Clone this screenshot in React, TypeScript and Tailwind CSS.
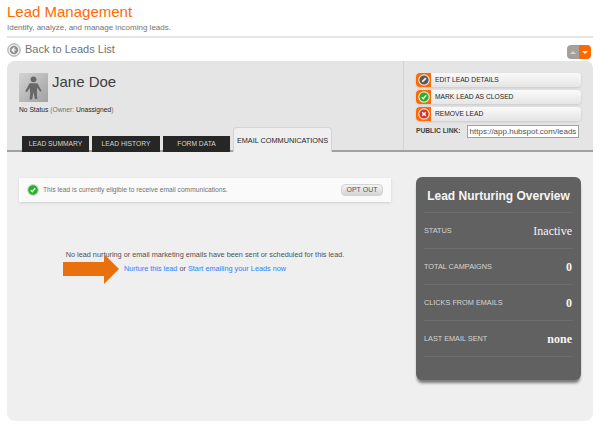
import React from "react";

function Person() {
  return (
    <div className="flex h-[29px] w-[29px] items-center justify-center bg-gradient-to-br from-neutral-300 to-neutral-400">
      <svg viewBox="0 0 30 30" className="h-full w-full">
        <circle cx="15" cy="6.5" r="3" fill="#686868" />
        <path d="M11 10.5h8l4.5 8-1.6 1-3-4.5-.4 5 .5 7h-2.6L15 20l-1.4 7.5H11l.5-7-.4-5-3 4.5-1.6-1z" fill="#686868" />
      </svg>
    </div>
  );
}

function ActionIcon({ kind }: { kind: "edit" | "check" | "x" }) {
  const fill = kind === "edit" ? "#5a5a5a" : kind === "check" ? "#22b522" : "#d8332b";
  return (
    <div className="flex h-[14px] w-[15px] items-center justify-center rounded-l-sm bg-orange-500">
      <svg viewBox="0 0 12 12" className="h-3 w-3">
        <circle cx="6" cy="6" r="5.2" fill={fill} stroke="#e8e8e8" strokeWidth="1.2" />
        {kind === "edit" && <path d="M3.8 8.2 4.3 6.4 7.2 3.6 8.5 4.8 5.6 7.7z" fill="#f2f2f2" />}
        {kind === "check" && <path d="M3.8 6.2 5.3 7.8 8.2 4.2" fill="none" stroke="#fff" strokeWidth="1.4" />}
        {kind === "x" && <path d="M4.2 4.2 7.8 7.8M7.8 4.2 4.2 7.8" fill="none" stroke="#fff" strokeWidth="1.4" />}
      </svg>
    </div>
  );
}

function ActionButton({ kind, label }: { kind: "edit" | "check" | "x"; label: string }) {
  return (
    <div className="flex h-[14px] items-center rounded-sm bg-gradient-to-b from-neutral-50 to-neutral-200 shadow-sm">
      <ActionIcon kind={kind} />
      <span className="pl-1 pt-px text-[6.7px] text-neutral-800">{label}</span>
    </div>
  );
}

function Tab({ label, className }: { label: string; className: string }) {
  return (
    <div className={`flex h-4 items-center justify-center bg-neutral-800 text-[6.7px] text-neutral-300 ${className}`}>
      {label}
    </div>
  );
}

function Row({ label, value, bold }: { label: string; value: string; bold?: boolean }) {
  return (
    <div className="flex h-9 items-center justify-between border-t border-neutral-500/60">
      <span className="pt-0.5 text-[7.3px] text-neutral-300">{label}</span>
      <span
        className={`pr-px text-xs text-neutral-100 ${bold ? "font-bold" : ""}`}
        style={{ fontFamily: '"Liberation Serif", serif' }}
      >
        {value}
      </span>
    </div>
  );
}

export default function App() {
  return (
    <div
      className="flex h-[428px] w-[600px] flex-col overflow-hidden bg-white px-[7px]"
      style={{ fontFamily: '"Liberation Sans", Arial, sans-serif' }}
    >
      <div className="h-[38px] border-b-2 border-neutral-200 pt-0.5">
        <div className="text-[15px] leading-5 text-orange-500">Lead Management</div>
        <div className="text-[8px] leading-3 text-neutral-500">Identify, analyze, and manage incoming leads.</div>
      </div>

      <div className="flex h-[23px] items-center justify-between">
        <div className="flex items-center gap-1">
          <svg viewBox="0 0 14 14" className="h-3.5 w-3.5">
            <circle cx="7" cy="7" r="6.2" fill="#f2f2f2" stroke="#9a9a9a" />
            <circle cx="7" cy="7" r="4.2" fill="#8e8e8e" />
            <path d="M7.5 4.5 5 7l2.5 2.5M5 7h4" fill="none" stroke="#fff" strokeWidth="1.1" />
          </svg>
          <span className="text-[11px] text-neutral-500">Back to Leads List</span>
        </div>
        <div className="mb-0.5 mr-0.5 flex h-3.5 w-6 self-end overflow-hidden rounded-sm">
          <div className="flex flex-1 items-center justify-center bg-stone-400">
            <div className="h-0 w-0 border-x-[3px] border-b-[3px] border-x-transparent border-b-stone-300" />
          </div>
          <div className="flex flex-1 items-center justify-center bg-orange-500">
            <div className="h-0 w-0 border-x-[3px] border-t-[3px] border-x-transparent border-t-white" />
          </div>
        </div>
      </div>

      <div className="mb-[7px] flex flex-1 flex-col overflow-hidden rounded-lg bg-[#efefef]">
        <div className="flex h-[91px] border-b-2 border-neutral-400 bg-neutral-200">
          <div className="relative flex-1 pl-3 pt-3">
            <div className="flex gap-1">
              <Person />
              <div className="text-[15px] leading-[18px] text-neutral-700">Jane Doe</div>
            </div>
            <div className="mt-0.5 text-[6.7px] leading-3 text-neutral-800">
              No Status <span className="text-neutral-500">(Owner: </span>Unassigned<span className="text-neutral-500">)</span>
            </div>
            <div className="absolute -bottom-0.5 left-[15px] flex items-end gap-[3px]">
              <Tab label="LEAD SUMMARY" className="w-[67px]" />
              <Tab label="LEAD HISTORY" className="w-[68px]" />
              <Tab label="FORM DATA" className="w-[67px]" />
              <div className="flex h-[25px] w-[99px] items-start justify-center whitespace-nowrap rounded-t-sm border-x border-t border-neutral-300 bg-[#efefef] pt-2 text-[7.3px] text-neutral-800">
                EMAIL COMMUNICATIONS
              </div>
            </div>
          </div>
          <div className="flex w-[190px] flex-col gap-[3px] border-l border-neutral-300 px-3 pt-3">
            <ActionButton kind="edit" label="EDIT LEAD DETAILS" />
            <ActionButton kind="check" label="MARK LEAD AS CLOSED" />
            <ActionButton kind="x" label="REMOVE LEAD" />
            <div className="mt-px flex items-center gap-1.5 pr-0.5">
              <span className="whitespace-nowrap text-[6.7px] font-bold text-neutral-700">PUBLIC LINK:</span>
              <div className="h-[13px] flex-1 overflow-hidden whitespace-nowrap border border-neutral-400 bg-white px-0.5 text-[8px] leading-[11px] text-neutral-600">
                https://app.hubspot.com/leads
              </div>
            </div>
          </div>
        </div>

        <div className="flex flex-1 items-start justify-between px-3 pt-6">
          <div className="mt-0.5 w-[372px]">
            <div className="flex h-6 items-center justify-between bg-neutral-50 px-2 shadow-sm">
              <div className="flex items-center gap-1">
                <svg viewBox="0 0 12 12" className="h-3 w-3">
                  <circle cx="6" cy="6" r="5.4" fill="#22b522" stroke="#d8d8d8" strokeWidth="1.2" />
                  <path d="M3.8 6.2 5.3 7.8 8.2 4.2" fill="none" stroke="#fff" strokeWidth="1.4" />
                </svg>
                <span className="text-[6.7px] text-neutral-500">This lead is currently eligible to receive email communications.</span>
              </div>
              <div className="flex h-3 w-[42px] items-center justify-center rounded-sm border border-neutral-300 bg-gradient-to-b from-neutral-100 to-neutral-300 text-[7px] text-neutral-600">
                OPT OUT
              </div>
            </div>
            <div className="relative mt-[46px] text-center text-[7.3px] leading-[14px] text-neutral-600">
              <div>No lead nurturing or email marketing emails have been sent or scheduled for this lead.</div>
              <div>
                <span className="text-blue-500">Nurture this lead</span> or{" "}
                <span className="text-blue-500">Start emailing your Leads now</span>
              </div>
              <svg viewBox="0 0 56 30" className="absolute left-11 top-1.5 h-[30px] w-14">
                <path d="M0 8h41V0l15 15-15 15v-8H0z" fill="#e8710d" />
              </svg>
            </div>
          </div>

          <div className="mt-px h-[203px] w-[165px] rounded-md bg-[#616161] px-2 shadow-[0_4px_3px_-1px_rgba(0,0,0,0.5)]">
            <div className="flex h-[35px] items-center justify-center whitespace-nowrap pt-0.5 text-xs font-bold text-neutral-100">Lead Nurturing Overview</div>
            <Row label="STATUS" value="Inactive" />
            <Row label="TOTAL CAMPAIGNS" value="0" bold />
            <Row label="CLICKS FROM EMAILS" value="0" bold />
            <Row label="LAST EMAIL SENT" value="none" bold />
            <div className="border-t border-neutral-500/60" />
          </div>
        </div>
      </div>
    </div>
  );
}
